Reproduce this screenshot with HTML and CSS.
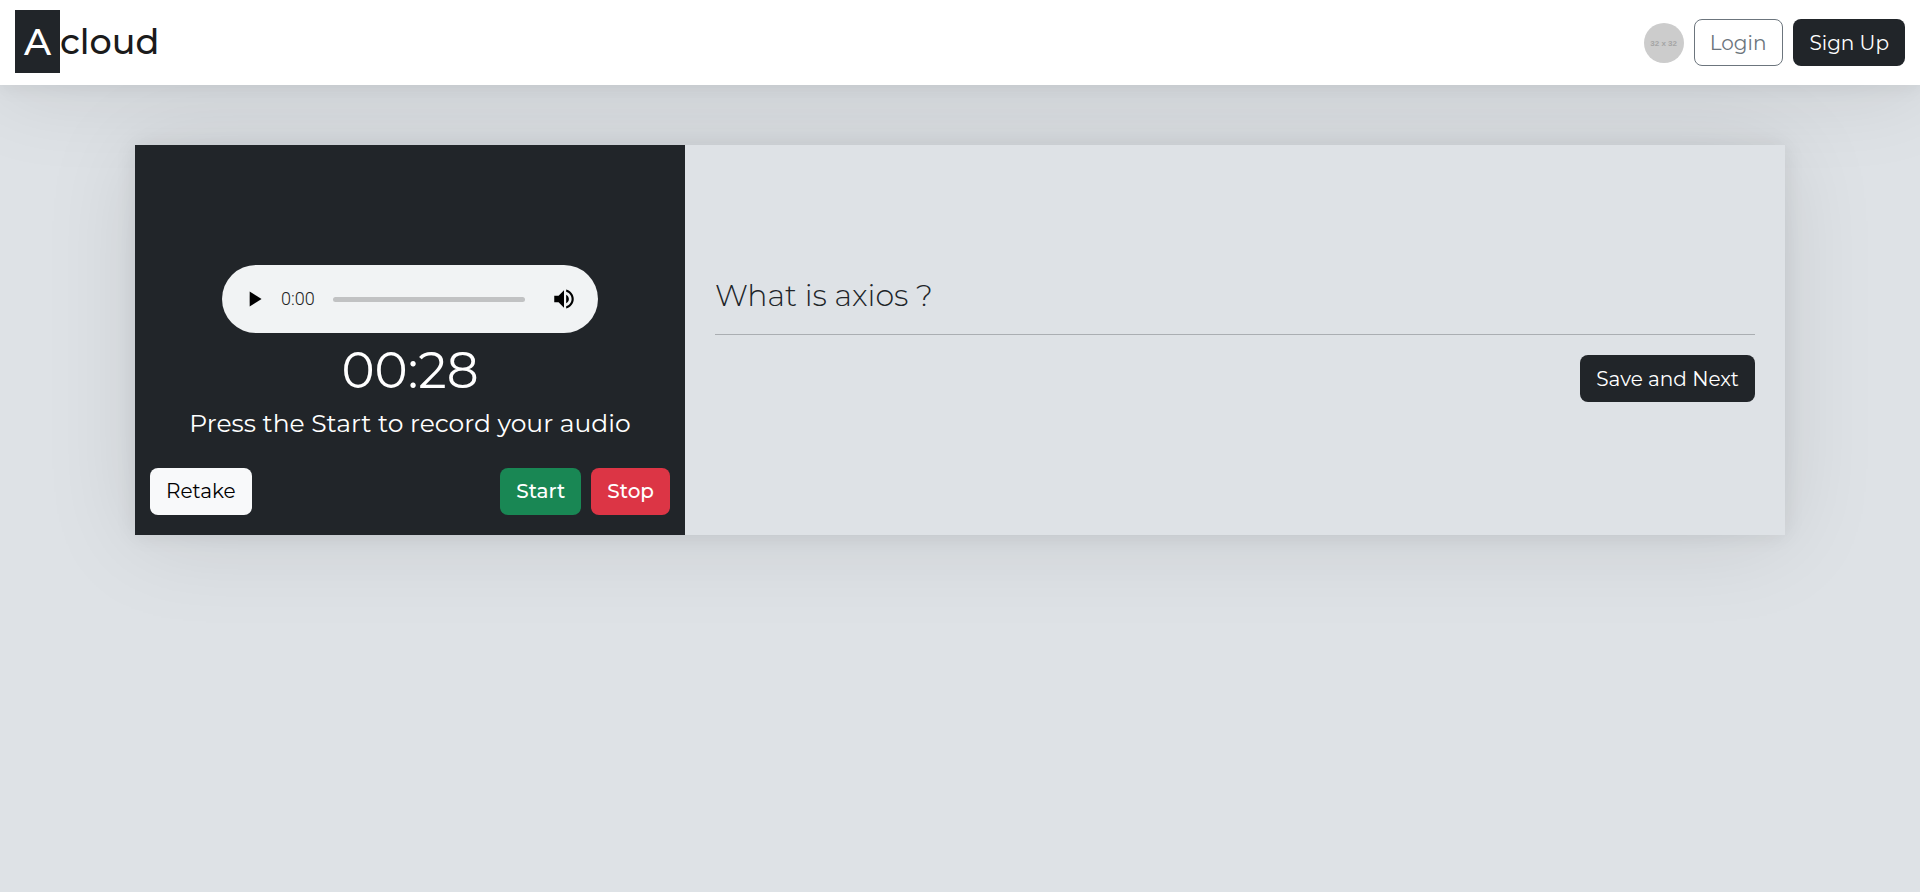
FILE: index.html
```html
<!DOCTYPE html>
<html lang="en">
<head>
<meta charset="utf-8">
<meta name="viewport" content="width=device-width, initial-scale=1">
<title>Acloud</title>
<link rel="stylesheet" href="styles.css">
</head>
<body>
<header class="navbar">
  <a class="brand" href="#"><span class="brand-mark">A</span><span class="brand-name">cloud</span></a>
  <nav class="actions">
    <span class="avatar">32 x 32</span>
    <button class="btn btn-outline" type="button">Login</button>
    <button class="btn btn-dark" type="button">Sign Up</button>
  </nav>
</header>
<main class="page">
  <section class="card">
    <div class="recorder">
      <div class="player">
        <button class="icon-btn" type="button" aria-label="Play">
          <svg class="icon" viewBox="0 0 24 24"><path d="M8 5v14l11-7z"/></svg>
        </button>
        <span class="time">0:00</span>
        <input class="seek" type="range" min="0" max="100" value="0" aria-label="Seek">
        <button class="icon-btn" type="button" aria-label="Mute">
          <svg class="icon" viewBox="0 0 24 24"><path d="M3 9v6h4l5 5V4L7 9H3zm13.500 3c0-1.770-1.020-3.290-2.500-4.030v8.050c1.480-.730 2.500-2.250 2.500-4.020zM14 3.230v2.060c2.890.860 5 3.540 5 6.710s-2.110 5.850-5 6.710v2.060c4.010-.910 7-4.490 7-8.770s-2.990-7.860-7-8.770z"/></svg>
        </button>
      </div>
      <div class="timer">00:28</div>
      <p class="hint">Press the Start to record your audio</p>
      <div class="controls">
        <button class="btn btn-light" type="button">Retake</button>
        <div class="group">
          <button class="btn btn-green" type="button">Start</button>
          <button class="btn btn-red" type="button">Stop</button>
        </div>
      </div>
    </div>
    <div class="question">
      <h1 class="title">What is axios ?</h1>
      <hr class="rule">
      <button class="btn btn-dark save" type="button">Save and Next</button>
    </div>
  </section>
</main>
</body>
</html>
```
FILE: styles.css
```css
* { box-sizing: border-box; }
body {
  display: flex;
  flex-direction: column;
  margin: 0;
  min-height: 100vh;
  background: #dee2e6;
  color: #212529;
  font-family: Montserrat, Inter, sans-serif;
  font-size: 20px;
}
.navbar {
  display: flex;
  align-items: center;
  justify-content: space-between;
  padding: 10px 15px 12px;
  background: #fff;
  box-shadow: 0 0 20px rgba(0, 0, 0, .08), 0 5px 90px rgba(0, 0, 0, .1);
}
.brand {
  display: flex;
  align-items: center;
  color: #1b1b1b;
  font-size: 37px;
  font-weight: 500;
  line-height: 63px;
  text-decoration: none;
}
.brand-mark {
  width: 45px;
  background: #212529;
  color: #fff;
  text-align: center;
}
.brand-name { font-size: 35px; }
.actions { display: flex; align-items: center; gap: 10px; padding-top: 2px; }
.avatar {
  width: 40px;
  height: 40px;
  border-radius: 50%;
  background: #ccc;
  color: #a5a5a5;
  font: 700 8px/41px "Liberation Sans", sans-serif;
  text-align: center;
}
.btn {
  padding: 8px 15px 6px;
  border: 1px solid transparent;
  border-radius: 8px;
  font: inherit;
  line-height: 31px;
  white-space: nowrap;
  cursor: pointer;
}
.btn-outline { padding: 8px 16px 6px 15px; border-color: #6c757d; background: transparent; color: #6c757d; }
.btn-dark { background: #212529; color: #fff; }
.controls .btn { padding: 7px 15px; }
.btn-light { background: #f8f9fa; color: #000; }
.btn-green { background: #198754; color: #fff; font-weight: 500; }
.btn-red { background: #dc3545; color: #fff; font-weight: 500; }
.page {
  flex: 1;
  overflow: hidden;
  padding: 60px 15px;
}
.card {
  display: grid;
  grid-template-columns: 1fr 2fr;
  max-width: 1650px;
  margin: 0 auto;
  background: #dee2e6;
  box-shadow: 0 0 20px rgba(0, 0, 0, .08), 0 5px 90px rgba(0, 0, 0, .1);
}
.recorder {
  display: flex;
  flex-direction: column;
  align-items: center;
  padding: 120px 15px 20px;
  background: #212529;
  color: #fff;
}
.player {
  display: flex;
  align-items: center;
  width: 100%;
  max-width: 376px;
  height: 68px;
  padding: 0 17px 0 15px;
  border-radius: 34px;
  background: #f1f3f4;
}
.icon-btn {
  display: flex;
  padding: 4px;
  border: 0;
  background: none;
  cursor: pointer;
}
.icon { width: 26px; height: 26px; fill: #000; }
.time {
  margin: 0 18px 0 10px;
  color: #222;
  font: 300 18px/24px Roboto, sans-serif;
}
.seek {
  flex: 1;
  min-width: 0;
  height: 5px;
  margin: 0 22px 0 0;
  border-radius: 3px;
  background: #c1c2c3;
  appearance: none;
}
.seek::-webkit-slider-thumb { width: 0; height: 0; appearance: none; }
.timer { margin-top: 8px; font-size: 50px; line-height: 60px; }
.hint { margin: 7px 0 30px; font-size: 25px; line-height: 30px; }
.controls { display: flex; justify-content: space-between; width: 100%; }
.group { display: flex; gap: 10px; }
.question {
  display: flex;
  flex-direction: column;
  justify-content: center;
  padding: 30px;
}
.title { margin: 0; font-size: 30px; font-weight: 300; line-height: 36px; }
.rule {
  width: 100%;
  height: 1px;
  margin: 20px 0;
  border: 0;
  background: #aaaeb2;
}
.save { align-self: flex-end; }
```
